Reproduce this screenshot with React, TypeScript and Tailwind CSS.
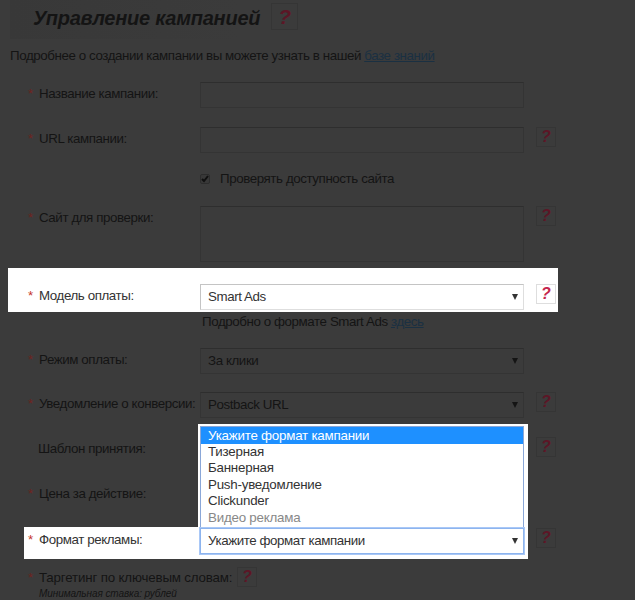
import React from "react";
import clsx from "clsx";

const formats = [
  "Укажите формат кампании",
  "Тизерная",
  "Баннерная",
  "Push-уведомление",
  "Clickunder",
  "Видео реклама",
];

function Help({ lit, large, className }: { lit?: boolean; large?: boolean; className?: string }) {
  return (
    <button
      type="button"
      className={clsx(
        "flex shrink-0 items-center justify-center border font-bold italic tracking-normal",
        large ? "h-[27px] w-[27px] text-[21px] leading-none" : "h-5 w-5 text-[16px] leading-none",
        lit ? "border-[#dedede] text-[#c5254c]" : "border-[#353535] text-[#5c1626]",
        className
      )}
    >
      ?
    </button>
  );
}

function Label({ children, required = true, lit }: { children: React.ReactNode; required?: boolean; lit?: boolean }) {
  return (
    <div className="flex w-[172px] shrink-0 whitespace-nowrap pt-1 leading-4">
      {required && (
        <span className={clsx("w-[11px] shrink-0", lit ? "text-[#c5332b]" : "text-[#70231f]")}>*</span>
      )}
      <span className={clsx(lit ? "text-[#333]" : "text-[#141414]", !required && "pl-[10px]")}>{children}</span>
    </div>
  );
}

function Select({ value, lit, focused }: { value: string; lit?: boolean; focused?: boolean }) {
  return (
    <div
      className={clsx(
        "flex h-[26px] w-[324px] shrink-0 items-center justify-between border pl-[7px] pr-[5px]",
        lit ? "text-[#333]" : "text-[#141414]",
        focused && "border-[#8db4ee] shadow-[0_0_0_1px_#a9c8f7]",
        !focused && lit && "border-[#dedede] border-t-[#c4c4c4] border-l-[#c4c4c4]",
        !focused && !lit && "border-[#343434] border-t-[#2e2e2e]"
      )}
    >
      <span>{value}</span>
      <svg width="6" height="6" viewBox="0 0 6 6" fill="currentColor">
        <path d="M0 0h6L3 6z" />
      </svg>
    </div>
  );
}

function Input({ className }: { className?: string }) {
  return (
    <div
      className={clsx("w-[324px] shrink-0 border border-[#343434] border-t-[#2e2e2e]", className)}
    />
  );
}

export default function App() {
  return (
    <main className="h-[600px] w-[635px] overflow-hidden bg-[#3b3b3b] font-['Liberation_Sans',Arial,sans-serif] text-[13.33px] tracking-[-0.41px] text-[#141414]">
      <header className="ml-[10px] flex h-[39px] w-[230px] bg-linear-to-r from-[#383838] to-[#3b3b3b] pl-[23px]">
        <h1 className="shrink-0 whitespace-nowrap pt-[6px] text-[20px] font-bold italic leading-6 tracking-[-0.25px]">
          Управление кампанией
        </h1>
        <Help large className="ml-[11px] mt-[3px]" />
      </header>
      <p className="h-[43px] whitespace-nowrap pl-[10px] pt-[9px] leading-4">
        Подробнее о создании кампании вы можете узнать в нашей{" "}
        <a className="text-[#1a3042] underline">базе знаний</a>
      </p>

      <form>
        <div className="flex h-[45px] pl-7">
          <Label>Название кампании:</Label>
          <Input className="h-[26px]" />
        </div>
        <div className="flex h-10 pl-7">
          <Label>URL кампании:</Label>
          <Input className="h-[26px]" />
          <Help className="ml-3" />
        </div>
        <div className="flex h-[39px] gap-[10px] pl-[200px] pt-1">
          <span className="mt-[3px] flex h-[10px] w-[10px] items-center justify-center rounded-[2px] border border-[#2c2c2c] bg-[#383838]">
            <svg width="8" height="8" viewBox="0 0 8 8" fill="none" stroke="#101010" strokeWidth="2">
              <path d="M1 4l2 2 4-5" />
            </svg>
          </span>
          <span className="leading-4">Проверять доступность сайта</span>
        </div>
        <div className="flex h-[62px] pl-7">
          <Label>Сайт для проверки:</Label>
          <Input className="h-14" />
          <Help className="ml-3" />
        </div>
        <div className="ml-2 flex h-11 w-[550px] bg-white pl-5 pt-4">
          <Label lit>Модель оплаты:</Label>
          <Select lit value="Smart Ads" />
          <Help lit className="ml-3" />
        </div>
        <p className="h-9 pl-[202px] pt-[2px] leading-4">
          Подробно о формате Smart Ads <a className="text-[#1a3042] underline">здесь</a>
        </p>
        <div className="flex h-11 pl-7">
          <Label>Режим оплаты:</Label>
          <Select value="За клики" />
        </div>
        <div className="flex h-[45px] pl-7">
          <Label>Уведомление о конверсии:</Label>
          <Select value="Postback URL" />
          <Help className="ml-3" />
        </div>
        <div className="flex h-[45px] pl-7">
          <Label required={false}>Шаблон принятия:</Label>
          <Help className="ml-[336px]" />
        </div>
        <div className="flex h-[45px] pl-7">
          <Label>Цена за действие:</Label>
        </div>
        <div className="relative flex h-8 pl-6">
          <div className="flex h-8 w-[504px] shrink-0 bg-white pl-1 pt-px">
            <Label lit>Формат рекламы:</Label>
            <Select lit focused value={formats[0]} />
          </div>
          <Help className="ml-2 mt-px" />
          <div className="absolute bottom-8 left-[198px] w-[330px] bg-white pl-[2px] pr-1 pt-[2px]">
            <ul className="h-[101px] border border-b-0 border-[#8aa7d8] leading-[16.4px] tracking-[-0.22px] text-[#333]">
              {formats.map((name, i) => (
                <li
                  key={name}
                  className={clsx(
                    "pl-[7px]",
                    i === 0 && "bg-[#1e90ff] pt-[0.5px] text-white",
                    i === formats.length - 1 && "text-[#888]"
                  )}
                >
                  {name}
                </li>
              ))}
            </ul>
          </div>
        </div>
        <div className="flex pl-7 pt-[7px]">
          <Label>
            <span className="tracking-[-0.17px]">Таргетинг по ключевым словам:</span>
            <small className="block text-[10px] italic tracking-[-0.08px]">Минимальная ставка: рублей</small>
          </Label>
          <Help className="ml-[37px] mt-px" />
        </div>
      </form>
    </main>
  );
}
